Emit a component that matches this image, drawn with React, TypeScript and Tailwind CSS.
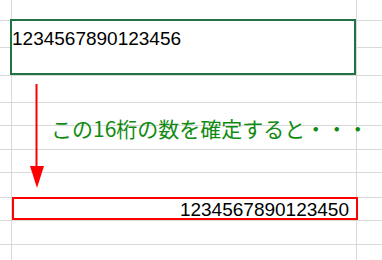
import React from "react";

const line = "border-[#d9d9d9]";

function Row({ h, children, right }: { h: string; children?: React.ReactNode; right?: boolean }) {
  return (
    <div className={`flex ${h} border-b ${line}`}>
      <div className={`w-[12px] shrink-0 border-r ${line}`} />
      <div
        className={`w-[345px] shrink-0 border-r ${line} flex ${right ? "justify-end pr-[7px] pt-[2px]" : ""}`}
      >
        {children}
      </div>
      <div className="flex-1" />
    </div>
  );
}

export default function App() {
  const num = "font-['Liberation_Sans',Arial,sans-serif] text-[19px] leading-none text-black";

  return (
    <div className="relative w-[382px] h-[260px] overflow-hidden bg-white">
      {/* sheet */}
      <Row h="h-[21px]" />
      <div className="flex h-[55px]">
        <div className={`w-[12px] shrink-0 flex flex-col border-r ${line}`}>
          <div className={`h-[27px] border-b ${line}`} />
          <div className={`h-[28px] border-b ${line}`} />
        </div>
        <div className={`w-[345px] shrink-0 border-r border-b ${line} pt-[6px]`}>
          <span className={num}>1234567890123456</span>
        </div>
        <div className="flex-1 flex flex-col">
          <div className={`h-[27px] border-b ${line}`} />
          <div className={`h-[28px] border-b ${line}`} />
        </div>
      </div>
      <Row h="h-[27px]" />
      <Row h="h-[23px]" />
      <Row h="h-[24px]" />
      <Row h="h-[23px]" />
      <Row h="h-[25px]" />
      <Row h="h-[23px]" right>
        <span className={num}>1234567890123450</span>
      </Row>
      <Row h="h-[24px]" />
      <Row h="h-[16px]" />

      {/* selection boxes */}
      <div className="absolute left-[10px] top-[19px] w-[346px] h-[56px] border-2 border-[#217346]" />
      <div className="absolute left-[12px] top-[197px] w-[346px] h-[23px] border-2 border-[#ff0000]" />

      {/* arrow */}
      <svg className="absolute left-0 top-0" width="382" height="260">
        <line x1="36.5" y1="84" x2="36.5" y2="168" stroke="#ff0000" strokeWidth="2" />
        <polygon points="30,166 44,166 37,188" fill="#ff0000" />
      </svg>

      {/* note */}
      <div className="absolute left-[51px] top-[118px] whitespace-nowrap font-['Noto_Sans_CJK_JP',sans-serif] text-[21px] leading-none text-[#108a10]">
        この16桁の数を確定すると・・・
      </div>
    </div>
  );
}
